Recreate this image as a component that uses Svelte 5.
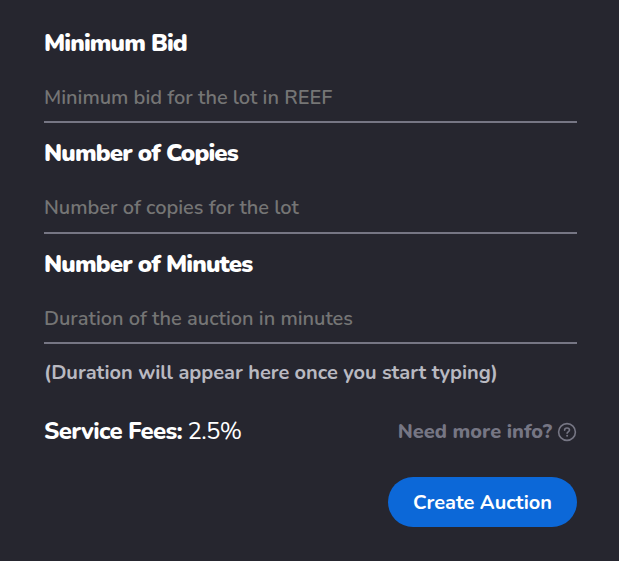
<script>
  const fields = [
    { id: 'bid', label: 'Minimum Bid', placeholder: 'Minimum bid for the lot in REEF' },
    { id: 'copies', label: 'Number of Copies', placeholder: 'Number of copies for the lot' },
    { id: 'minutes', label: 'Number of Minutes', placeholder: 'Duration of the auction in minutes' }
  ];
</script>

<form class="auction" onsubmit={(e) => e.preventDefault()}>
  {#each fields as field (field.id)}
    <div class="field {field.id}">
      <label for={field.id}>{field.label}</label>
      <input id={field.id} type="text" placeholder={field.placeholder} />
    </div>
  {/each}

  <p class="hint">(Duration will appear here once you start typing)</p>

  <div class="meta">
    <div class="fees"><strong>Service Fees:</strong> <span>2.5%</span></div>
    <div class="info">
      <span>Need more info?</span>
      <svg width="20" height="20" viewBox="0 0 20 20" fill="none" stroke="currentColor" stroke-width="1.6" stroke-linecap="round" aria-hidden="true">
        <circle cx="10" cy="10" r="8.4" />
        <path d="M7.6 8.2C7.6 6.8 8.6 6 10 6s2.5.8 2.5 2.1c0 1.7-2.4 1.8-2.4 3.2" />
        <circle cx="10.1" cy="13.7" r="1" fill="currentColor" stroke="none" />
      </svg>
    </div>
  </div>

  <button type="submit">Create Auction</button>
</form>

<style>
  :global(body) { background: #26262f; }

  .auction {
    box-sizing: border-box;
    height: 561px;
    padding: 27px 42px 0 44px;
    display: flex;
    flex-direction: column;
    background: #26262f;
    color: #fff;
    font-family: Nunito, Lato, sans-serif;
    overflow: hidden;
  }

  .field {
    display: flex;
    flex-direction: column;
    height: 96px;
    margin-bottom: 14px;
  }

  .copies { height: 97px; }
  .minutes { margin-bottom: 15px; }

  label {
    font-size: 24px;
    line-height: 32px;
    font-weight: 900;
    letter-spacing: -0.86px;
    white-space: nowrap;
  }

  input {
    box-sizing: border-box;
    flex: 1;
    min-height: 0;
    width: 100%;
    margin: 0;
    padding: 22px 0 8px;
    border: 0;
    border-bottom: 2px solid #767684;
    border-radius: 0;
    outline: 0;
    background: transparent;
    color: #fff;
    font-family: inherit;
    font-size: 20px;
    font-weight: 600;
    letter-spacing: -0.02px;
  }

  .copies input { padding-bottom: 9px; }
  .minutes input { padding-bottom: 7px; }

  input::placeholder { color: #757575; opacity: 1; }

  .hint {
    margin: 1px 0 0;
    font-size: 20px;
    line-height: 26px;
    font-weight: 700;
    letter-spacing: -0.02px;
    color: #b9b9c1;
    white-space: nowrap;
  }

  .meta {
    display: flex;
    align-items: center;
    justify-content: space-between;
    height: 34px;
    margin-top: 29px;
    white-space: nowrap;
  }

  .fees {
    font-size: 24px;
    line-height: 32px;
    margin-bottom: 2px;
    letter-spacing: -0.7px;
  }

  .fees strong { font-weight: 800; }

  .info {
    display: flex;
    align-items: center;
    gap: 5px;
    color: #767684;
    font-size: 20px;
    line-height: 26px;
    font-weight: 800;
  }

  button {
    align-self: flex-end;
    flex: none;
    width: 189px;
    height: 50px;
    margin-top: 28px;
    padding: 0;
    border: 0;
    border-radius: 25px;
    background: #0c68d8;
    color: #fff;
    font-family: inherit;
    font-size: 20px;
    font-weight: 700;
  }
</style>
